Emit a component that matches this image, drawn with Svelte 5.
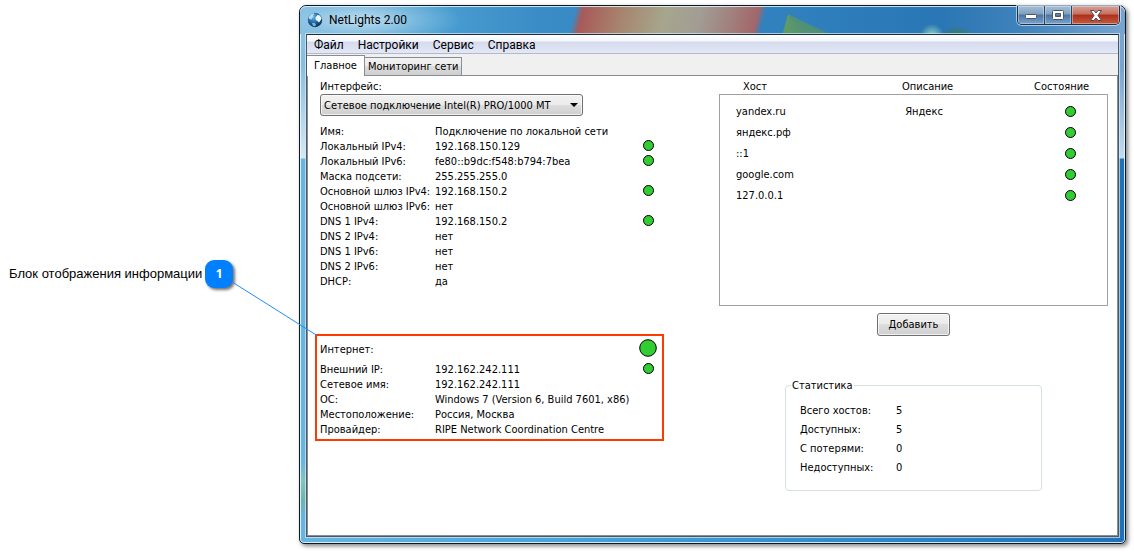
<script>
  const menu = ['Файл', 'Настройки', 'Сервис', 'Справка'];

  const network = [
    { label: 'Имя:', value: 'Подключение по локальной сети' },
    { label: 'Локальный IPv4:', value: '192.168.150.129', ok: true },
    { label: 'Локальный IPv6:', value: 'fe80::b9dc:f548:b794:7bea', ok: true },
    { label: 'Маска подсети:', value: '255.255.255.0' },
    { label: 'Основной шлюз IPv4:', value: '192.168.150.2', ok: true },
    { label: 'Основной шлюз IPv6:', value: 'нет' },
    { label: 'DNS 1 IPv4:', value: '192.168.150.2', ok: true },
    { label: 'DNS 2 IPv4:', value: 'нет' },
    { label: 'DNS 1 IPv6:', value: 'нет' },
    { label: 'DNS 2 IPv6:', value: 'нет' },
    { label: 'DHCP:', value: 'да' }
  ];

  const internet = [
    { label: 'Внешний IP:', value: '192.162.242.111', ok: true },
    { label: 'Сетевое имя:', value: '192.162.242.111' },
    { label: 'ОС:', value: 'Windows 7 (Version 6, Build 7601, x86)' },
    { label: 'Местоположение:', value: 'Россия, Москва' },
    { label: 'Провайдер:', value: 'RIPE Network Coordination Centre' }
  ];

  const hosts = [
    { name: 'yandex.ru', note: 'Яндекс' },
    { name: 'яндекс.рф', note: '' },
    { name: '::1', note: '' },
    { name: 'google.com', note: '' },
    { name: '127.0.0.1', note: '' }
  ];

  const stats = [
    { label: 'Всего хостов:', value: 5 },
    { label: 'Доступных:', value: 5 },
    { label: 'С потерями:', value: 0 },
    { label: 'Недоступных:', value: 0 }
  ];
</script>

{#snippet dot()}
  <svg class="dot" viewBox="0 0 11 11" aria-hidden="true">
    <circle cx="5.5" cy="5.5" r="5" fill="#32cd32" stroke="#000" />
  </svg>
{/snippet}

{#snippet rows(items)}
  <dl class="rows">
    {#each items as item}
      <div class="row">
        <dt>{item.label}</dt>
        <dd>{item.value}</dd>
        {#if item.ok}{@render dot()}{/if}
      </div>
    {/each}
  </dl>
{/snippet}

<main class="page">
  <aside class="callout">
    <span>Блок отображения информации</span>
    <span class="badge">
      1
      <svg class="leader" viewBox="0 0 84 54" aria-hidden="true">
        <path d="M0 0.500L84 53.500" stroke="#1e8cff" fill="none" />
      </svg>
    </span>
  </aside>

  <section class="window">
    <header class="titlebar">
      <svg class="globe" viewBox="0 0 16 16" aria-hidden="true">
        <defs>
          <radialGradient id="sea" cx="0.4" cy="0.3" r="0.75">
            <stop offset="0" stop-color="#5fb4ea" />
            <stop offset="0.55" stop-color="#1e639f" />
            <stop offset="1" stop-color="#0b2444" />
          </radialGradient>
        </defs>
        <circle cx="8" cy="8" r="7.200" fill="url(#sea)" />
        <path d="M1.500 6C2.300 3.400 4.300 1.700 6.500 1.300L7.500 2.200L6 3.500L6.500 4.800L5 6L4.500 7.500L3 7.200Z" fill="#b8daef" />
        <path d="M8.500 5.500L10.500 3L13 3.500L14.600 6.500L13.500 8.500L12 10.500L10.500 9L8.800 8Z" fill="#eef6fb" />
        <path d="M5 11L7.500 10.800L9 12.500L8 14.500L5.800 13.500Z" fill="#7fb3d8" />
      </svg>
      <h1>NetLights 2.00</h1>
      <div class="controls">
        <button type="button" aria-label="Свернуть">
          <svg class="low" width="12" height="6" viewBox="0 0 12 6"><rect x="0.500" y="0.500" width="11" height="4" rx="1" fill="#fff" stroke="#4a5666" /></svg>
        </button>
        <button type="button" aria-label="Развернуть">
          <svg width="12" height="10" viewBox="0 0 12 10">
            <path fill-rule="evenodd" d="M1.500 .5H10.500Q11.500 .5 11.500 1.500V8.500Q11.500 9.500 10.500 9.500H1.500Q.5 9.500 .5 8.500V1.500Q.5 .5 1.500 .5ZM3.500 3.500V6.500H8.500V3.500Z" fill="#fff" stroke="#4a5666" />
          </svg>
        </button>
        <button type="button" class="close" aria-label="Закрыть">
          <svg width="12" height="11" viewBox="0 0 12 11">
            <path d="M.5 .5H4L6 3L8 .5H11.500L8 5.500L11.500 10.500H8L6 8L4 10.500H.5L4 5.500Z" fill="#fff" stroke="#5a4650" />
          </svg>
        </button>
      </div>
    </header>

    <div class="client">
      <nav class="menu">
        {#each menu as item}<button type="button">{item}</button>{/each}
      </nav>

      <div class="tabs" role="tablist">
        <button type="button" role="tab" aria-selected="true" class="active">Главное</button>
        <button type="button" role="tab" aria-selected="false">Мониторинг сети</button>
      </div>

      <div class="panel">
        <div class="left">
          <div class="adapter">
            <label for="adapter">Интерфейс:</label>
            <div class="select">
              <select id="adapter">
                <option>Сетевое подключение Intel(R) PRO/1000 MT</option>
              </select>
              <svg class="arrow" viewBox="0 0 8 4" aria-hidden="true"><path d="M0 0H8L4 4Z" /></svg>
            </div>
          </div>

          {@render rows(network)}

          <section class="internet">
            <div class="row head">
              <h2>Интернет:</h2>
              <svg class="dot big" viewBox="0 0 18 18" aria-hidden="true">
                <circle cx="9" cy="9" r="8.300" fill="#32cd32" stroke="#000" />
              </svg>
            </div>
            {@render rows(internet)}
          </section>
        </div>

        <div class="right">
          <table>
            <thead>
              <tr><th>Хост</th><th>Описание</th><th>Состояние</th></tr>
            </thead>
            <tbody>
              {#each hosts as host}
                <tr><td>{host.name}</td><td>{host.note}</td><td>{@render dot()}</td></tr>
              {/each}
            </tbody>
          </table>

          <button type="button" class="add">Добавить</button>

          <fieldset>
            <legend>Статистика</legend>
            <dl>
              {#each stats as stat}
                <div><dt>{stat.label}</dt><dd>{stat.value}</dd></div>
              {/each}
            </dl>
          </fieldset>
        </div>
      </div>
    </div>
  </section>
</main>

<style>
  :global(body) {
    background: #fff;
  }

  .page,
  .page :global(*) {
    box-sizing: border-box;
  }

  .page {
    display: flex;
    align-items: flex-start;
    padding: 5px 8px 8px 0;
    font: 11px/15px 'DejaVu Sans Condensed', 'DejaVu Sans', sans-serif;
    color: #000;
  }

  button,
  select {
    font: inherit;
    color: inherit;
    margin: 0;
  }

  h1,
  h2,
  dl,
  dd {
    margin: 0;
    font-weight: normal;
  }

  /* Callout beside the window */
  .callout {
    flex: none;
    width: 299px;
    display: flex;
    align-items: center;
    gap: 3px;
    padding: 255px 0 0 9px;
    font: 13px/28px 'Liberation Sans', Arial, sans-serif;
    white-space: nowrap;
  }

  .badge {
    position: relative;
    z-index: 1;
    width: 28px;
    height: 28px;
    border-radius: 9px;
    background: #0080ff;
    box-shadow: 2px 2px 3px rgba(0, 0, 0, 0.55);
    color: #fff;
    font: bold 12px/28px 'Noto Sans', sans-serif;
    text-align: center;
  }

  .leader {
    position: absolute;
    left: 28px;
    top: 22px;
    width: 84px;
    height: 54px;
  }

  /* Window frame */
  .window {
    flex: 1;
    min-width: 0;
    padding: 0 6px 6px;
    border: 1px solid #0c1a26;
    border-radius: 7px 7px 5px 5px;
    background:
      linear-gradient(#8fc4e2 0, #86bfe0 60px, #d5e8f4 152px, transparent 153px) left / 7px 100% no-repeat,
      linear-gradient(transparent 455px, #84c4bc 475px, #6cb4b0 495px, transparent 512px) left / 7px 100% no-repeat,
      linear-gradient(#7ba6d0 0, #76a3cf 60px, #c3dbee 152px, #1f72b8 153px) right / 7px 100% no-repeat,
      linear-gradient(90deg, #66b6e2, #4aa5da 30%, #2a86c8 75%, #1f72b8);
    box-shadow:
      inset 0 0 0 1px rgba(235, 248, 255, 0.85),
      2px 2px 4px rgba(0, 0, 0, 0.5);
  }

  .titlebar {
    display: flex;
    align-items: center;
    height: 28px;
    margin: 0 -6px;
    padding: 0 5px 0 7px;
    border-radius: 6px 6px 0 0;
    background:
      radial-gradient(ellipse 100px 26px at 62px 14px, rgba(205, 230, 244, 0.85), rgba(160, 205, 232, 0.5) 55%, transparent),
      radial-gradient(circle 12px at 632px 30px, rgba(165, 225, 200, 0.9), transparent),
      radial-gradient(ellipse 16px 8px at 657px 28px, rgba(60, 120, 90, 0.9), transparent),
      conic-gradient(from 118deg at 488px 8px, #4f8f78 0, #5f9c62 74deg, transparent 80deg 356deg, #4f8f78),
      linear-gradient(104deg, transparent 268px, #a85a58 276px, #a7866f 316px, #a6a68d 356px, #a29c94 391px, #a0817d 421px, #a3666a 446px, transparent 453px),
      linear-gradient(90deg, #7fbce0, #4a9fd2 130px, #3a8cc6 240px, #2f80bd 500px, #2a76b4 640px, #3f82bb 720px, #78a4d0);
    box-shadow: inset 0 1px 0 rgba(235, 248, 255, 0.8);
  }

  .globe {
    width: 16px;
    height: 16px;
    margin-right: 6px;
  }

  h1 {
    flex: 1;
    font: 12px/20px Roboto, sans-serif;
  }

  .controls {
    align-self: flex-start;
    display: flex;
    border: 1px solid #1d2f45;
    border-top: 0;
    border-radius: 0 0 5px 5px;
    box-shadow: 0 0 0 1px rgba(215, 232, 246, 0.7);
    overflow: hidden;
  }

  .controls button {
    display: grid;
    place-items: center;
    width: 27px;
    height: 18px;
    padding: 0;
    border: 0;
    border-right: 1px solid #2c435e;
    background: linear-gradient(#a8c0d8, #7f9fc0 45%, #4a74a0 50%, #7aa4cc);
    box-shadow: inset 0 0 0 1px rgba(220, 236, 250, 0.45);
  }

  .controls .low {
    margin-top: 4px;
  }

  .controls .close {
    width: 47px;
    border-right: 0;
    background: linear-gradient(#d8a096, #c4705f 45%, #aa2f1c 50%, #c85a3c);
  }

  .client {
    border: 1px solid #1c2c3c;
    border-color: #1c2c3c #4c5866 #4c5866;
    box-shadow: 0 0 0 1px rgba(215, 236, 248, 0.7);
    background: #fff;
  }

  .menu {
    display: flex;
    gap: 14px;
    height: 19px;
    padding: 0 7px;
    background: linear-gradient(#fff 0, #f4f6fb 6px, #d5dbed 7px, #e2e8f6);
    border-bottom: 1px solid #b4bac8;
  }

  .menu button {
    padding: 0;
    border: 0;
    background: none;
    font: 12px/20px Roboto, sans-serif;
  }

  .tabs {
    display: flex;
    align-items: flex-end;
    height: 22px;
    background: #f0f0f0;
    border-bottom: 1px solid #898c95;
  }

  .tabs button {
    height: 18px;
    padding: 0 3px;
    border: 1px solid #898c95;
    border-left: 0;
    border-bottom: 0;
    background: linear-gradient(#f2f2f2, #ebebeb 50%, #dcdcdc 50%, #cfcfcf);
  }

  .tabs .active {
    height: 21px;
    margin-bottom: -1px;
    padding: 0 7px 2px;
    background: #fff;
  }

  .panel {
    display: grid;
    grid-template-columns: 349fr 389fr;
    gap: 55px;
    padding: 3px 9px 44px 7px;
    border: 1px solid #898c95;
    border-top: 0;
  }

  .adapter {
    padding: 0 5px;
    margin-bottom: 8px;
  }

  .adapter label {
    display: block;
  }

  .select {
    position: relative;
    width: 263px;
  }

  select {
    appearance: none;
    display: block;
    width: 100%;
    height: 22px;
    padding: 0 20px 0 3px;
    border: 1px solid #707070;
    border-radius: 3px;
    background: linear-gradient(#f2f2f2, #ebebeb 50%, #dddddd 50%, #cfcfcf);
    box-shadow: inset 0 0 0 1px rgba(255, 255, 255, 0.7);
  }

  .arrow {
    position: absolute;
    right: 5px;
    top: 9px;
    width: 8px;
    height: 4px;
    pointer-events: none;
  }

  .rows {
    padding: 0 5px;
  }

  .row {
    display: grid;
    grid-template-columns: 115px 1fr auto;
    align-items: center;
    height: 15px;
    white-space: nowrap;
  }

  .dot {
    display: block;
    width: 11px;
    height: 11px;
  }

  .row .dot {
    margin: 0 5px 2px 0;
  }

  .internet {
    margin-top: 45px;
    border: 2px solid #ff3c00;
    padding-bottom: 2px;
  }

  .internet .rows {
    padding: 0 3px;
  }

  .internet .head {
    height: 26px;
    padding: 0 3px;
    grid-template-columns: 1fr auto;
  }

  h2 {
    font-size: 11px;
  }

  .row .big {
    width: 18px;
    height: 18px;
    margin-right: 2px;
  }

  .right {
    display: flex;
    flex-direction: column;
    align-items: center;
  }

  table,
  thead,
  tbody {
    display: block;
    width: 100%;
  }

  tr {
    display: grid;
    grid-template-columns: 160fr 145fr 84fr;
    align-items: center;
    height: 21px;
  }

  thead tr {
    height: 15px;
  }

  tbody {
    height: 212px;
    padding: 6px 0;
    border: 1px solid #a0a0a0;
  }

  th,
  td {
    padding: 0;
    font-weight: normal;
    text-align: left;
  }

  th:first-child {
    padding-left: 24px;
  }

  td:first-child {
    padding-left: 16px;
  }

  th:nth-child(2) {
    padding-left: 23px;
  }

  td:nth-child(2) {
    padding-left: 26px;
  }

  th:last-child {
    padding-left: 10px;
  }

  td:last-child {
    padding-left: 42px;
  }

  .add {
    width: 73px;
    height: 23px;
    margin-top: 7px;
    padding: 0;
    border: 1px solid #707070;
    border-radius: 3px;
    background: linear-gradient(#f2f2f2, #ebebeb 50%, #dddddd 50%, #cfcfcf);
    box-shadow: inset 0 0 0 1px rgba(255, 255, 255, 0.7);
  }

  fieldset {
    width: 257px;
    margin: 42px 0 0;
    padding: 8px 14px 13px;
    border: 1px solid #d5dfe5;
    border-radius: 4px;
  }

  legend {
    margin-left: -9px;
    padding: 0 1px;
  }

  fieldset div {
    display: grid;
    grid-template-columns: 96px 1fr;
    line-height: 19px;
  }
</style>
